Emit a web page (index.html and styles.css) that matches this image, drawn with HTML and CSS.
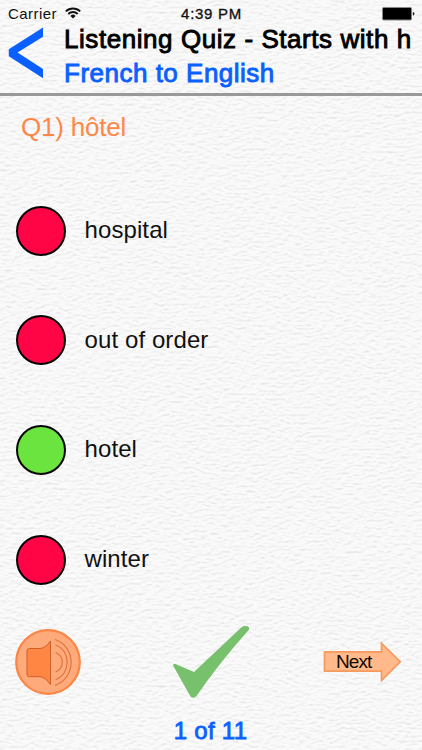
FILE: index.html
```html
<!DOCTYPE html>
<html lang="en">
<head>
<meta charset="utf-8">
<title>Listening Quiz</title>
<link rel="stylesheet" href="styles.css">
</head>
<body>
<svg class="paper" width="422" height="750" aria-hidden="true">
  <filter id="grain" x="0" y="0" width="100%" height="100%" color-interpolation-filters="sRGB">
    <feTurbulence type="fractalNoise" baseFrequency="0.17 0.38" numOctaves="2" seed="8" result="n"/>
    <feDiffuseLighting in="n" surfaceScale="0.8" lighting-color="#ffffff" diffuseConstant="1.1">
      <feDistantLight azimuth="260" elevation="62"/>
    </feDiffuseLighting>
  </filter>
  <rect width="422" height="750" fill="#f9f9f9"/>
  <rect class="grain" width="422" height="750" filter="url(#grain)"/>
</svg>
<div class="app">
  <div class="status">
    <div class="carrier"><span>Carrier</span>
      <svg width="16" height="12" viewBox="0 0 16 12" fill="none" stroke="#111" stroke-width="1.9">
        <path d="M.8 4.4a10.3 10.3 0 0 1 14.4 0M3.3 7a6.7 6.7 0 0 1 9.4 0"/>
        <path d="M5.4 8.900a3.700 3.700 0 0 1 5.200 0L8 11.600z" fill="#111" stroke="none"/>
      </svg>
    </div>
    <div class="time">4:39 PM</div>
    <svg class="battery" width="33" height="14" viewBox="0 0 33 14">
      <rect x=".5" y=".5" width="29" height="12.5" rx="1.2" fill="#000" stroke="#888"/>
      <path d="M30.8 4.7q1.700.4 1.700 2t-1.700 2z" fill="#222"/>
    </svg>
  </div>
  <header class="header">
    <svg class="back" width="36" height="52" viewBox="0 0 36 52"><path d="M35 .5v9.200L9.500 25.500 35 42v9.300L.8 29.200v-7z" fill="#0a60ff"/></svg>
    <div class="titles">
      <h1 class="title">Listening Quiz - Starts with h</h1>
      <h2 class="subtitle">French to English</h2>
    </div>
  </header>
  <p class="question">Q1) hôtel</p>
  <ul class="options">
    <li class="option"><span class="dot"></span><span class="word">hospital</span></li>
    <li class="option"><span class="dot"></span><span class="word">out of order</span></li>
    <li class="option"><span class="dot correct"></span><span class="word">hotel</span></li>
    <li class="option"><span class="dot"></span><span class="word">winter</span></li>
  </ul>
  <footer class="footer">
    <svg class="sound" width="66" height="66" viewBox="0 0 66 66">
      <circle cx="33" cy="33" r="31.8" fill="#ffaa7a" stroke="#fc8545" stroke-width="2.2"/>
      <path d="M14.500 19.500H25q5 0 10.500-7.500v43.500Q30 48 25 47.700H14.500q-2.500 0-2.500-2.500V22q0-2.500 2.500-2.500z" fill="#ff8743" stroke="#cc612c"/>
      <path d="M40.500 23.500c9 3.500 9 16 0 19.500M40.500 16c15.500 5 15.500 29.500 0 34.500M40 10.500c21.500 7.500 21.500 38 0 46" fill="none" stroke="#dd7039" stroke-width="1.100"/>
    </svg>
    <svg class="check" width="78" height="74" viewBox="0 0 78 74"><path d="M1.200 40.800Q.8 38 4 39.200L22 47 69.500 2.200Q72 .3 75.500 1.200 78.300 2.800 76.500 5.300 48 37 24.500 71 21.500 74.300 18.500 71.500z" fill="#77c06c"/></svg>
    <div class="next">
      <svg class="arrow" width="79" height="41" viewBox="0 0 79 41"><path d="M1.500 10.800H58.500V2.200L77.300 20.700 58.500 39.500V30.200H1.500z" fill="#ffb98b" stroke="#f69a5f" stroke-width="1.700"/></svg>
      <span class="next-label">Next</span>
    </div>
  </footer>
  <div class="progress">1 of 11</div>
</div>
</body>
</html>
```
FILE: styles.css
```css
* { box-sizing: border-box; margin: 0; padding: 0; }
body {
  width: 422px;
  height: 750px;
  overflow: hidden;
  background: #f5f5f5;
  font-family: "Liberation Sans", Arial, sans-serif;
  color: #111;
}
.paper { position: absolute; inset: 0; z-index: -1; }
.grain { opacity: .3; }
.app { display: flex; flex-direction: column; height: 750px; }
.status {
  display: grid;
  grid-template-columns: 1fr auto 1fr;
  height: 22px;
  padding: 5px 7px 0 8px;
  font-size: 15px;
  line-height: 18px;
  white-space: nowrap;
}
.carrier { display: flex; gap: 8px; letter-spacing: .45px; }
.carrier svg { margin-top: 2px; }
.time { letter-spacing: .7px; -webkit-text-stroke: .35px #111; }
.battery { justify-self: end; margin-top: 2px; }
.header { display: flex; height: 74px; border-bottom: 3px solid #999; }
.back { flex: none; margin: 5px 0 0 8px; }
.titles { margin-left: 20px; white-space: nowrap; }
.title, .subtitle {
  font-size: 26px;
  font-weight: 400;
  line-height: 34px;
}
.title { color: #000; letter-spacing: .56px; -webkit-text-stroke: .9px #000; }
.subtitle { color: #0a60ff; letter-spacing: .5px; -webkit-text-stroke: .9px #0a60ff; }
.question {
  margin: 14px 0 0 21px;
  font-size: 26px;
  line-height: 34px;
  letter-spacing: -.2px;
  color: #ff8748;
}
.options { list-style: none; margin-top: 32px; }
.option { display: flex; align-items: center; height: 109.6px; padding-left: 16px; }
.dot { width: 50px; height: 50px; border: 2px solid #050505; border-radius: 50%; background: #ff0546; }
.dot.correct { background: #6ce43f; }
.word { margin-left: 18.5px; padding-bottom: 1px; font-size: 24px; letter-spacing: .1px; }
.footer { display: flex; height: 86px; padding: 11px 0 0 15px; }
.sound { margin-top: 4px; }
.check { margin-left: 91px; }
.next { display: flex; align-items: center; width: 79px; height: 41px; margin: 16px 0 0 73px; position: relative; }
.arrow { position: absolute; inset: 0; }
.next-label { position: relative; padding: 0 0 0 13px; font-size: 19px; letter-spacing: -.9px; color: #100802; }
.progress {
  margin-top: 14px;
  padding-right: 1px;
  text-align: center;
  font-size: 24px;
  line-height: 34px;
  letter-spacing: .3px;
  color: #0a60ff;
  -webkit-text-stroke: .8px #0a60ff;
}
```
